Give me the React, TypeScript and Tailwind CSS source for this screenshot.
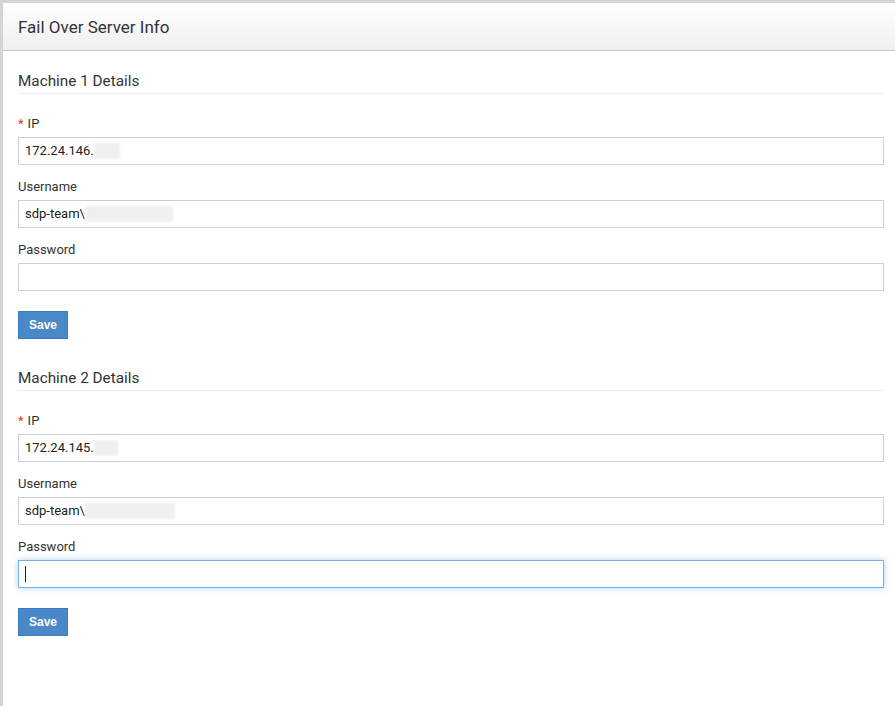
import React from "react";

const font = { fontFamily: "Roboto, 'Liberation Sans', Arial, sans-serif" };

function Field({
  label,
  required,
  value,
  redactWidth,
  focused,
}: {
  label: string;
  required?: boolean;
  value?: string;
  redactWidth?: string;
  focused?: boolean;
}) {
  return (
    <div className="flex flex-col">
      <label className="text-[13px] leading-[18px] text-[#333]">
        {required && <span className="text-[#e32] mr-[4px]">*</span>}
        {label}
      </label>
      <div
        className={
          "mt-[4px] h-[28px] flex items-center px-[6px] bg-white " +
          (focused
            ? "border border-[#74b2eb] shadow-[0_0_6px_rgba(102,175,233,0.55)]"
            : "border border-[#cfcfcf]")
        }
      >
        {value && <span className="text-[13px] text-[#222]">{value}</span>}
        {redactWidth && (
          <span className={"inline-block h-[16px] bg-[#efefef] blur-[1px] " + redactWidth} />
        )}
        {focused && <span className="inline-block w-[1px] h-[16px] bg-[#222]" />}
      </div>
    </div>
  );
}

function Section({
  title,
  ip,
  ipRedact,
  userRedact,
  focused,
}: {
  title: string;
  ip: string;
  ipRedact: string;
  userRedact: string;
  focused?: boolean;
}) {
  return (
    <div className="flex flex-col">
      <h2 className="text-[15.3px] leading-[22px] text-[#333] pb-[1px] border-b border-[#ececec]">
        {title}
      </h2>
      <div className="mt-[21px] flex flex-col gap-[13px]">
        <Field label="IP" required value={ip} redactWidth={ipRedact} />
        <Field label="Username" value="sdp-team\" redactWidth={userRedact} />
        <Field label="Password" focused={focused} />
      </div>
      <div className="mt-[20px]">
        <button
          className="h-[28px] w-[50px] bg-[#4a89c8] border border-[#3e7dbd] text-white text-[12px] font-bold"
          style={{ fontFamily: "'Liberation Sans', Arial, sans-serif" }}
        >
          Save
        </button>
      </div>
    </div>
  );
}

export default function App() {
  return (
    <div className="w-[895px] h-[706px] bg-[#d4d4d4] pt-[3px] pl-[3px] overflow-hidden" style={font}>
      <div className="h-full bg-white flex flex-col">
        <div className="h-[48px] flex items-center pl-[15px] pt-[3px] bg-gradient-to-b from-white to-[#efefef] border-b border-[#c4c4c4]">
          <h1 className="text-[17px] text-[#333]">Fail Over Server Info</h1>
        </div>
        <div className="pl-[15px] pr-[11px] pt-[19px] flex flex-col gap-[28px]">
          <Section title="Machine 1 Details" ip="172.24.146." ipRedact="w-[26px]" userRedact="w-[88px]" />
          <Section
            title="Machine 2 Details"
            ip="172.24.145."
            ipRedact="w-[24px]"
            userRedact="w-[90px]"
            focused
          />
        </div>
      </div>
    </div>
  );
}
